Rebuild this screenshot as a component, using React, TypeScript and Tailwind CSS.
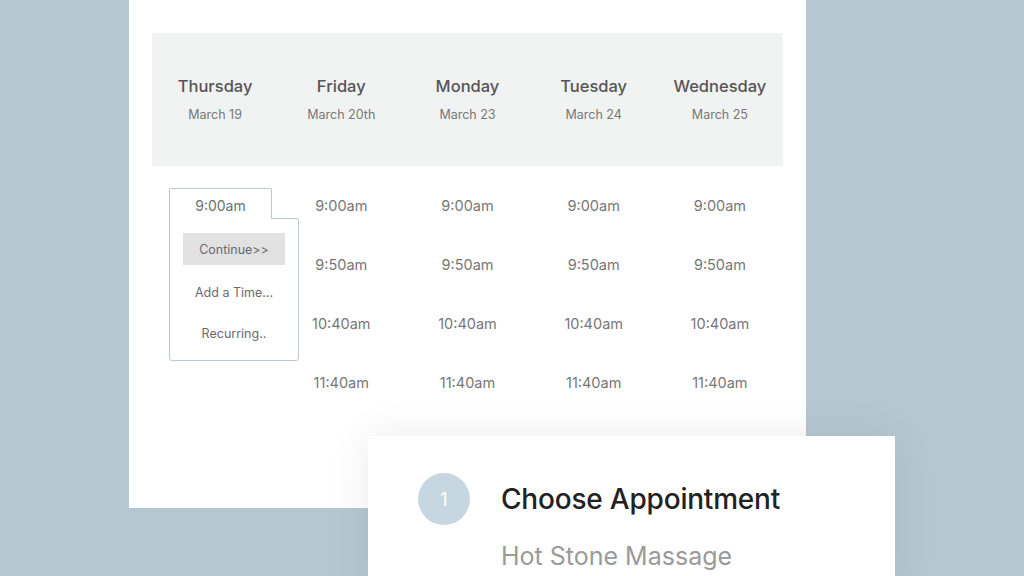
const DAYS = [
  { name: "Thursday", date: "March 19" },
  { name: "Friday", date: "March 20th" },
  { name: "Monday", date: "March 23" },
  { name: "Tuesday", date: "March 24" },
  { name: "Wednesday", date: "March 25" },
];

const TIMES = ["9:00am", "9:50am", "10:40am", "11:40am"];

function TimePopover() {
  return (
    <div className="absolute left-[17px] top-[22px] w-[130px]">
      <div className="relative z-10 h-[31px] w-[103px] rounded-t-[2px] border border-b-0 border-[#b9cad4] bg-white text-center leading-[34px] text-[14px] text-[#6f6f6f]">
        9:00am
      </div>
      <div className="-mt-px h-[143px] rounded-b-[3px] rounded-tr-[2px] border border-[#b9cad4] bg-white px-[13px] pt-[14px] text-[12.5px] text-[#6a6a6a]">
        <div className="flex h-[32px] items-center justify-center bg-[#e2e2e2] pt-[2px]">Continue&gt;&gt;</div>
        <div className="mt-[19px] text-center">Add a Time...</div>
        <div className="mt-[22px] text-center">Recurring..</div>
      </div>
    </div>
  );
}

export default function App() {
  return (
    <div className="relative h-[576px] w-[1024px] overflow-hidden bg-[#b5c8d1] font-['Inter',sans-serif]">
      <div className="ml-[129px] h-[508px] w-[677px] bg-white pl-[23px] pt-[33px]">
        <div className="grid h-[133px] w-[631px] grid-cols-5 bg-[#f1f2f2] pt-[41px]">
          {DAYS.map((d) => (
            <div key={d.name} className="text-center">
              <div className="text-[16.5px] font-medium text-[#555]">{d.name}</div>
              <div className="mt-[7px] text-[12.5px] text-[#777]">{d.date}</div>
            </div>
          ))}
        </div>
        <div className="grid w-[631px] grid-cols-5">
          {DAYS.map((d, i) => (
            <div key={d.name} className="relative pt-[30px] text-center text-[14.5px] text-[#777]">
              {i === 0 ? (
                <TimePopover />
              ) : (
                TIMES.map((t) => (
                  <div key={t} className="h-[59px] leading-[20px]">{t}</div>
                ))
              )}
            </div>
          ))}
        </div>
      </div>

      <div className="absolute left-[368px] top-[436px] h-[160px] w-[527px] bg-white shadow-[0_0_40px_rgba(0,0,0,0.08)]">
        <div className="ml-[50px] mt-[37px] flex items-center gap-[31px]">
          <div className="flex h-[52px] w-[52px] items-center justify-center rounded-full bg-[#c7d7e1] text-[18px] text-white">1</div>
          <div className="text-[28px] font-medium tracking-[-0.2px] text-[#222]">Choose Appointment</div>
        </div>
        <div className="ml-[133px] mt-[13px] text-[25px] text-[#9a9a9a]">Hot Stone Massage</div>
      </div>
    </div>
  );
}
